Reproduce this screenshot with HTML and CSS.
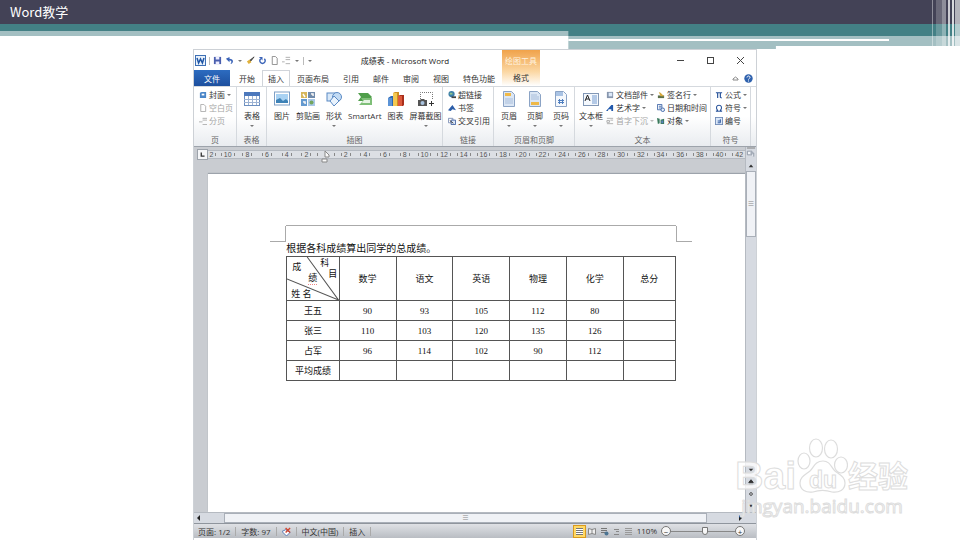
FILE: index.html
```
<!DOCTYPE html>
<html>
<head>
	<meta charset="utf-8">
	<title>Word教学</title>
	<link rel="stylesheet" href="styles.css">
</head>
<body>

	<header class="slide-header">
		<h1>Word教学</h1>
		<div class="band-teal"></div>
		<div class="band-light"></div>
		<div class="band-right"><div class="line"></div></div>
		<div class="stripes"></div>
	</header>

	<main class="slide">
		<div class="word">

			<!-- barra de titulo -->
			<div class="titlebar">
				<div class="quick">
					<svg class="logo" viewBox="0 0 11 11"><rect x=".5" y=".5" width="10" height="10" fill="#e8f1fb" stroke="#3d6fb4"/><path d="M2 3l1.600 5L5.500 4l1.900 4L9 3" fill="none" stroke="#1f55a5" stroke-width="1.500"/></svg>
					<i class="bar"></i>
					<svg viewBox="0 0 10 10"><path d="M1 1h8v8H1z" fill="#4a5fae"/><path d="M3 1h4v3H3zM3 6h4v3H3z" fill="#eef"/></svg>
					<svg viewBox="0 0 10 10"><path d="M1 3l4-2v2c5 0 5 5 1 6 2-3 1-4-1-4v2z" fill="#3b64b8"/></svg>
					<i class="arrow"></i>
					<svg viewBox="0 0 10 10"><path d="M9 1L5 6 4 5z" fill="#444" stroke="#444"/><path d="M1 6l3-2 2 3-3 2z" fill="#e0b13c"/></svg>
					<svg viewBox="0 0 10 10"><path d="M3 3a3 3 0 1 0 4 0" fill="none" stroke="#3b64b8" stroke-width="1.600"/><path d="M1 1h4v4z" fill="#3b64b8"/></svg>
					<svg viewBox="0 0 10 10"><path d="M2.500 .5h3.500l2 2v7H2.500z" fill="#fff" stroke="#888"/></svg>
					<svg viewBox="0 0 10 10"><path d="M4 1.500h5M4 4h5M4 8.500h5M0 6.500h3" stroke="#aaa" fill="none"/></svg>
					<i class="arrow"></i>
					<i class="bar"></i>
					<i class="arrow"></i>
				</div>
				<div class="doc-title">成绩表 - Microsoft Word</div>
				<div class="window-buttons">
					<button aria-label="最小化"><svg viewBox="0 0 10 10"><path d="M1 4.500h7" stroke="#444"/></svg></button>
					<button aria-label="最大化"><svg viewBox="0 0 10 10"><rect x="1.500" y="1.500" width="6" height="6" fill="none" stroke="#444"/></svg></button>
					<button aria-label="关闭"><svg viewBox="0 0 10 10"><path d="M1 1l7 7M8 1L1 8" stroke="#444"/></svg></button>
				</div>
			</div>

			<!-- abas -->
			<nav class="tabs">
				<button class="file">文件</button>
				<button>开始</button>
				<button class="active">插入</button>
				<button>页面布局</button>
				<button>引用</button>
				<button>邮件</button>
				<button>审阅</button>
				<button>视图</button>
				<button>特色功能</button>
				<button class="context"><span>绘图工具</span>格式</button>
				<div class="help">
					<svg viewBox="0 0 9 9"><path d="M2 5l2.500-2L7 5v1H2z" fill="none" stroke="#888"/></svg>
					<svg viewBox="0 0 9 9"><circle cx="4.500" cy="4.500" r="4.200" fill="#2f62ae"/><path d="M3 3.500c0-2 3-2 3 0 0 1-1.500 1-1.500 2M4.500 6.500v1" fill="none" stroke="#fff"/></svg>
				</div>
			</nav>

			<!-- faixa de opcoes -->
			<div class="ribbon">
				<section class="group">
					<div class="tools">
						<div class="col">
							<button><svg viewBox="0 0 9 9"><path d="M1 2l2-1h5v7H1z" fill="#4b86c8"/><path d="M3 3h3v2H3z" fill="#fff"/></svg>封面<i class="arrow"></i></button>
							<button class="off"><svg viewBox="0 0 9 9"><path d="M2 .5h3.500l2 2v6H2z" fill="#fff" stroke="#aaa"/></svg>空白页</button>
							<button class="off"><svg viewBox="0 0 9 9"><path d="M4 1.500h5M4 3.500h5M4 8.500h5M0 5.500h4" stroke="#aaa" fill="none"/></svg>分页</button>
						</div>
					</div>
					<h2>页</h2>
				</section>
				<section class="group">
					<div class="tools">
						<button class="big"><svg viewBox="0 0 16 16"><rect x=".5" y="1.500" width="15" height="13" fill="#fff" stroke="#6c8fc0"/><path d="M0 1h16v4H0z" fill="#4c78bc"/><path d="M0 8.500h16M0 11.500h16M4.500 5v9M8.500 5v9M12.500 5v9" stroke="#9db3d3"/></svg>表格<i class="arrow"></i></button>
					</div>
					<h2>表格</h2>
				</section>
				<section class="group">
					<div class="tools">
						<button class="big"><svg viewBox="0 0 16 16"><rect x=".5" y="1" width="15" height="13" fill="#fff" stroke="#7f9fc5"/><path d="M2 3h12v9H2z" fill="#a9d2f3"/><path d="M2 12V9l4-2 3 3 3-2 2 2v2z" fill="#3d82b7"/></svg>图片</button>
						<button class="big"><svg viewBox="0 0 16 16"><path d="M1 1h6v6H1z" fill="#d6b75c"/><path d="M8 1h7v6H8z" fill="#708bab"/><path d="M1 8h6v7H1z" fill="#649ad0"/><path d="M8 8h7v7H8z" fill="#a9c8e8"/><path d="M3 3l2 3M11 3h2v2M3 11h2v2" stroke="#fff" stroke-width="1.500"/><circle cx="11.500" cy="11.500" r="2" fill="#73a55d"/></svg>剪贴画</button>
						<button class="big"><svg viewBox="0 0 16 16"><rect x="1" y="2" width="9" height="8" fill="#d8e8f8" stroke="#5b8ac4"/><circle cx="11" cy="6" r="4.500" fill="#c2dbf4" stroke="#5b8ac4"/><path d="M8 5l5 5-5 5-4-5z" fill="#e9f3fd" stroke="#5b8ac4"/></svg>形状<i class="arrow"></i></button>
						<button class="big"><svg viewBox="0 0 16 16"><path d="M1 2h10l4 4-4 4H1l3-4z" fill="#4f9e4a"/><path d="M4 7h11v7H2l4-4z" fill="#7fbf78"/><path d="M7 9h6v3H5z" fill="#e4f3e2"/></svg>SmartArt</button>
						<button class="big"><svg viewBox="0 0 16 16"><path d="M0 7l3-2h3v9l-1 1H0z" fill="#2d67b1"/><path d="M0 7h4v8H0z" fill="#5b93d6"/><path d="M5 2l2-1h4v13l-1 1H5z" fill="#d08f1f"/><path d="M5 2h4v13H5z" fill="#f3c851"/><path d="M10 5l2-1h4v10l-1 1h-5z" fill="#a92f1c"/><path d="M10 5h4v10h-4z" fill="#dc5a3c"/></svg>图表</button>
						<button class="big"><svg viewBox="0 0 16 16"><path d="M2.500 8V1.500h12V9" fill="none" stroke="#777" stroke-dasharray="1 1"/><path d="M0 9h2l1-1h3l1 1h2v6H0z" fill="#555"/><circle cx="4.500" cy="12" r="2" fill="#a9c3df"/><path d="M11 12.500h5M13.500 10v5" stroke="#333"/></svg>屏幕截图<i class="arrow"></i></button>
					</div>
					<h2>插图</h2>
				</section>
				<section class="group">
					<div class="tools">
						<div class="col">
							<button><svg viewBox="0 0 9 9"><circle cx="4" cy="3.500" r="3.500" fill="#3d7fa9"/><path d="M2 2h3v2H2z" fill="#8fc58b"/><path d="M4 7h5" stroke="#444" stroke-width="2"/></svg>超链接</button>
							<button><svg viewBox="0 0 9 9"><path d="M0 7l5-6 4 6-4-1-2 2z" fill="#2b5da8"/></svg>书签</button>
							<button><svg viewBox="0 0 9 9"><path d="M.5 1.500h5v5h-5z" fill="#fff" stroke="#7a8db5"/><path d="M3.500 3.500h5v5h-5z" fill="#dce8f8" stroke="#3f5f9f"/><path d="M2 4l4 3" stroke="#333"/></svg>交叉引用</button>
						</div>
					</div>
					<h2>链接</h2>
				</section>
				<section class="group">
					<div class="tools wide">
						<button class="big"><svg viewBox="0 0 16 16"><path d="M2.500 .5h8l3 3v12h-11z" fill="#dbe6f4" stroke="#8ba3c5"/><path d="M4 2h6v3H4z" fill="#efb949"/><path d="M4 8h8M4 10h8M4 12h8" stroke="#a9bedb"/></svg>页眉<i class="arrow"></i></button>
						<button class="big"><svg viewBox="0 0 16 16"><path d="M2.500 .5h8l3 3v12h-11z" fill="#dbe6f4" stroke="#8ba3c5"/><path d="M4 11h8v3H4z" fill="#efb949"/><path d="M4 4h6M4 6h8M4 8h8" stroke="#a9bedb"/></svg>页脚<i class="arrow"></i></button>
						<button class="big"><svg viewBox="0 0 16 16"><path d="M2.500 .5h8l3 3v12h-11z" fill="#f5f8fc" stroke="#8ba3c5"/><path d="M3 1h7v4H3z" fill="#a9c3e4"/><path d="M5 9.500h6M5 11.500h6M6.500 8v5M9.500 8v5" stroke="#4f7fc0"/></svg>页码<i class="arrow"></i></button>
					</div>
					<h2>页眉和页脚</h2>
				</section>
				<section class="group">
					<div class="tools tight">
						<button class="big"><svg viewBox="0 0 16 16"><rect x=".5" y="2.500" width="15" height="12" fill="#f4f8fd" stroke="#8297b5"/><path d="M9 4h5v9H9z" fill="#b3c9e6"/><path d="M2 10l2.500-6L7 10M3 8h3" fill="none" stroke="#222"/></svg>文本框<i class="arrow"></i></button>
						<div class="col">
							<button><svg viewBox="0 0 9 9"><path d="M1 1h7v7H1z" fill="#8796ad"/><path d="M3 2h4v4H3z" fill="#dce8f8"/></svg>文档部件<i class="arrow"></i></button>
							<button><svg viewBox="0 0 9 9"><path d="M0 8l6-7h2v7H6V6H3L2 8z" fill="#2259ac"/></svg>艺术字<i class="arrow"></i></button>
							<button class="off"><svg viewBox="0 0 9 9"><path d="M1 1.500h7M5 3.500h3M1 7.500h7M1 4h3v2H1z" fill="none" stroke="#aaa"/></svg>首字下沉<i class="arrow"></i></button>
						</div>
						<div class="col">
							<button><svg viewBox="0 0 9 9"><path d="M1 5h7v3H1z" fill="#5b6f49"/><path d="M2 1l2 1 4 4H4z" fill="#d7a83b"/></svg>签名行<i class="arrow"></i></button>
							<button><svg viewBox="0 0 9 9"><path d="M.5 .5h5v6h-5z" fill="#fff" stroke="#3e66a8"/><path d="M2 2.500h3M2 4.500h3" stroke="#3e66a8"/><circle cx="6.500" cy="6.500" r="2" fill="#e8f0fa" stroke="#3e66a8"/></svg>日期和时间</button>
							<button><svg viewBox="0 0 9 9"><path d="M0 1l3 1v5l-2 1zM4 3l4-1v6H4z" fill="#39795c"/><path d="M5 4h2v3H5z" fill="#5b80c0"/></svg>对象<i class="arrow"></i></button>
						</div>
					</div>
					<h2>文本</h2>
				</section>
				<section class="group">
					<div class="tools tight">
						<div class="col">
							<button><svg viewBox="0 0 9 9"><path d="M1 2h7M3 2v6M6 2v5l1.500 1" fill="none" stroke="#234f98" stroke-width="1.300"/></svg>公式<i class="arrow"></i></button>
							<button><svg viewBox="0 0 9 9"><path d="M1 8h2.500C0 4 2 1.500 4.500 1.500S9 4 5.500 8H8" fill="none" stroke="#234f98" stroke-width="1.200"/></svg>符号<i class="arrow"></i></button>
							<button><svg viewBox="0 0 9 9"><rect x=".5" y=".5" width="8" height="8" fill="#dce8f8" stroke="#6f89b5"/><path d="M3 6.500h3V2.500M3 4.500h3" fill="none" stroke="#234f98"/></svg>编号</button>
						</div>
					</div>
					<h2>符号</h2>
				</section>
			</div>

			<!-- regua e documento -->
			<div class="workspace">
				<div class="editor">
					<div class="ruler">
						<div class="tab-stop"><svg viewBox="0 0 11 11"><path d="M4 3v4.500h4" fill="none" stroke="#333" stroke-width="1.600"/></svg></div>
						<div class="scale">
							<span class="cut">2</span><span>10</span><span>8</span><span>6</span><span>4</span><span>2</span><span class="mark"><svg viewBox="0 0 12 12"><path d="M5 0l4 4v2H5zM2 8h5v3H2z" fill="#fafafa" stroke="#888"/></svg></span><span>2</span><span>4</span><span>6</span><span>8</span><span>10</span><span>12</span><span>14</span><span>16</span><span>18</span><span>20</span><span>22</span><span>24</span><span>26</span><span>28</span><span>30</span><span>32</span><span>34</span><span>36</span><span>38</span><span>40</span><span>42</span>
						</div>
					</div>
					<div class="paper">
						<div class="margin-box"><i></i><i></i></div>
						<p>根据各科成绩算出同学的总成绩。</p>
						<table>
							<thead>
								<tr>
									<th class="corner">
										<svg viewBox="0 0 51 43" preserveAspectRatio="none"><path d="M20 0L51 43L0 22" fill="none" stroke="#555"/></svg>
										<span class="c1">成</span><span class="c2">科</span><span class="c3">绩</span><span class="c4">目</span><span class="c5">姓 名</span>
									</th>
									<th>数学</th><th>语文</th><th>英语</th><th>物理</th><th>化学</th><th>总分</th>
								</tr>
							</thead>
							<tbody>
								<tr><td>王五</td><td>90</td><td>93</td><td>105</td><td>112</td><td>80</td><td></td></tr>
								<tr><td>张三</td><td>110</td><td>103</td><td>120</td><td>135</td><td>126</td><td></td></tr>
								<tr><td>占军</td><td>96</td><td>114</td><td>102</td><td>90</td><td>112</td><td></td></tr>
								<tr><td>平均成绩</td><td></td><td></td><td></td><td></td><td></td><td></td></tr>
							</tbody>
						</table>
					</div>
				</div>
				<div class="vscroll">
					<svg viewBox="0 0 11 11"><path d="M1 0h9" stroke="#777"/><path d="M1.500 3.500h5v4h-5zM4.500 5.500h4v4" fill="#f2f4f8" stroke="#8b95a3"/></svg>
					<svg viewBox="0 0 11 11"><path d="M3 8l2.500-3L8 8z" fill="#333"/></svg>
					<div class="thumb">≡</div>
					<div class="rail"></div>
					<svg viewBox="0 0 11 11"><path d="M3 4h5L5.500 7z" fill="#333"/></svg>
					<svg viewBox="0 0 11 11"><path d="M3 6l2.500-3L8 6zM3 8h5" fill="#333" stroke="#333"/></svg>
					<svg viewBox="0 0 11 11"><circle cx="5.500" cy="5.500" r="1.500" fill="none" stroke="#444"/></svg>
					<svg viewBox="0 0 11 11"><path d="M3 4h5L5.500 7z" fill="#333"/></svg>
				</div>
			</div>
			<div class="hscroll">
				<svg viewBox="0 0 10 10"><path d="M6 2v6L3 5z" fill="#222"/></svg>
				<div class="thumb">≡</div>
				<svg viewBox="0 0 10 10"><path d="M4 2v6l3-3z" fill="#222"/></svg>
			</div>

			<footer class="status">
				<span>页面: 1/2</span>
				<span>字数: 97</span>
				<span><svg viewBox="0 0 10 10"><path d="M0 5l4-2 5 3-4 4z" fill="#fff" stroke="#4d70b0"/><path d="M4 1l5 5M9 1L4 6" stroke="#d2452f" stroke-width="1.500"/></svg></span>
				<span>中文(中国)</span>
				<span>插入</span>
				<div class="views">
					<button class="on" aria-label="页面视图"><svg viewBox="0 0 9 9"><path d="M1 1h7v7H1z" fill="#fff"/><path d="M1 1.500h7M1 3.500h7M1 5.500h7M1 7.500h7" stroke="#777"/></svg></button>
					<button aria-label="阅读版式"><svg viewBox="0 0 9 9"><path d="M.5 1.500l3.500 1 3.500-1v6l-3.500-1-3.500 1zM4 2v5" fill="#eee" stroke="#888"/></svg></button>
					<button aria-label="Web 版式"><svg viewBox="0 0 9 9"><path d="M1 1.500h6M1 3.500h6M1 5.500h4" stroke="#777"/><circle cx="6.500" cy="6.500" r="2" fill="#4c7593"/></svg></button>
					<button aria-label="大纲"><svg viewBox="0 0 9 9"><path d="M2 2.500h5M4 4.500h3M2 7.500h5" stroke="#888"/></svg></button>
					<button aria-label="草稿"><svg viewBox="0 0 9 9"><path d="M1 1.500h7M1 3.500h7M1 5.500h7M1 7.500h7" stroke="#999"/></svg></button>
				</div>
				<label for="zoom">110%</label>
				<button class="round" aria-label="缩小">−</button>
				<input type="range" id="zoom" min="10" max="200" value="112">
				<button class="round" aria-label="放大">+</button>
			</footer>
		</div>

		<div class="watermark">
			<div class="brand">
				<b>Bai</b>
				<svg viewBox="0 0 52 56"><g fill="#fff" fill-opacity=".8" stroke="#ddd" stroke-width="1.200"><ellipse cx="8" cy="23" rx="6" ry="8"/><ellipse cx="20" cy="10" rx="6.500" ry="9"/><ellipse cx="35" cy="11" rx="6.500" ry="9"/><ellipse cx="45" cy="27" rx="6.500" ry="8"/><path d="M27 23c-8 0-9 6-13 10-5 4-10 6-10 12 0 7 6 10 13 9 6-2 13-2 19 0 7 1 13-2 13-9 0-6-5-8-10-12-4-4-5-10-12-10z"/></g><text x="27" y="50" text-anchor="middle">du</text></svg>
				<b class="cn">经验</b>
			</div>
			<div class="url">jingyan.baidu.com</div>
		</div>
	</main>

</body>
</html>
```
FILE: styles.css
```
* {
	box-sizing: border-box;
}

body {
	margin: 0;
	min-height: 100vh;
	display: flex;
	flex-direction: column;
	background: #fff;
	color: #333;
	font-family: "Open Sans", "Noto Sans CJK SC", sans-serif;
	font-size: 8px;
	line-height: 12px;
}

button {
	border: 0;
	padding: 0;
	background: none;
	color: inherit;
	font: inherit;
	white-space: nowrap;
}

svg {
	display: block;
	flex: none;
}

/* cabecalho do slide */
.slide-header {
	position: relative;
	height: 49px;
	flex: none;
}

.slide-header h1 {
	margin: 0;
	padding-left: 10px;
	height: 24px;
	background: #434256;
	color: #fff;
	font-family: "Noto Sans CJK SC", sans-serif;
	font-size: 13px;
	font-weight: normal;
	line-height: 24px;
}

.band-teal {
	height: 7px;
	background: #438085;
}

.band-light {
	height: 5px;
	background: #a3bfc2;
}

/* a parte direita fica por cima das duas faixas */
.band-right {
	position: absolute;
	top: 31px;
	right: 0;
	width: 40.800%;
	height: 18px;
	padding-top: 8px;
	background: linear-gradient(#438085 5px, #a3bfc2 5px);
	clip-path: polygon(0 0, 100% 0, 100% 15px, 53% 15px, 53% 100%, 0 100%);
}

.line {
	width: 82%;
	height: 2px;
	background: #fff;
}

.stripes {
	position: absolute;
	top: 0;
	right: 0;
	width: 28px;
	height: 49px;
	background: linear-gradient(90deg, #fff6 1px, #fff0 1px 4px, #fff3 4px 10px, #fff6 10px 14px, #fff0 14px 16px, #fffb 16px 18px, #fff0 18px 20px, #fffc 20px 22px, #fff0 22px 23px, #fff9 23px);
}

.slide {
	position: relative;
	flex: 1;
	display: grid;
	grid-template-columns: 193fr 564fr 203fr;
}

/* janela do word */
.word {
	grid-column: 2;
	display: flex;
	flex-direction: column;
	border: 1px solid #cdd1d6;
	border-width: 1px 1px 0;
	padding-bottom: 2px;
	background: #fff;
}

.titlebar {
	display: grid;
	grid-template-columns: 161fr 100fr 301fr;
	align-items: center;
	height: 21px;
}

.quick {
	display: flex;
	align-items: center;
	gap: 3px;
	padding-left: 1px;
}

.quick svg {
	width: 9px;
	height: 9px;
}

.quick .logo {
	width: 11px;
	height: 11px;
}

.bar {
	width: 1px;
	height: 8px;
	background: #bbb;
}

.arrow {
	border: 2px solid transparent;
	border-top-color: #777;
	border-bottom: 0;
}

.quick .arrow {
	margin: 0 1px;
}

.doc-title {
	white-space: nowrap;
	color: #222;
	text-align: center;
}

.window-buttons {
	display: flex;
	justify-content: flex-end;
	gap: 20px;
	padding-right: 10px;
}

.window-buttons svg {
	width: 10px;
	height: 10px;
}

.tabs {
	display: flex;
	align-items: flex-end;
	height: 16px;
	border-bottom: 1px solid #d5d9de;
}

.tabs button {
	height: 16px;
	padding: 0 7px;
	line-height: 15px;
}

.tabs .file {
	width: 36px;
	margin-right: 2px;
	background: linear-gradient(#2d6cc0, #1d4f9e);
	color: #fff;
}

.tabs .active {
	padding: 0 5px;
	border: 1px solid #d0d4da;
	border-bottom: 0;
	background: #fff;
}

.tabs .context {
	display: flex;
	flex-direction: column;
	align-items: center;
	height: 36px;
	padding: 3px 3px 0;
	background: linear-gradient(#f0a24a, #fbd7a3 60%, #fff);
}

.tabs .context span {
	height: 17px;
	color: #fff3df;
}

.help {
	display: flex;
	align-items: center;
	gap: 4px;
	height: 16px;
	margin-left: auto;
	padding-right: 3px;
}

.help svg {
	width: 9px;
	height: 9px;
}

.ribbon {
	display: grid;
	grid-template-columns: 43fr 30fr 176fr 51fr 81fr 136fr 40fr 5fr;
	height: 60px;
	border-bottom: 1px solid #9da3ab;
	background: linear-gradient(#fff, #fff 50%, #e9ecf0);
}

.group {
	display: flex;
	flex-direction: column;
	justify-content: space-between;
	min-width: 0;
	border-right: 1px solid #d5d9de;
}

.group h2 {
	margin: 0;
	color: #666;
	font-size: 8px;
	font-weight: normal;
	text-align: center;
}

.tools {
	display: flex;
	gap: 6px;
	padding: 1px 0 0 7px;
}

.tools.wide {
	gap: 10px;
}

.tools.tight {
	gap: 3px;
	padding-left: 4px;
}

.group:nth-child(1) .tools,
.group:nth-child(4) .tools {
	padding-left: 5px;
}

.big {
	display: flex;
	flex-direction: column;
	align-items: center;
}

.big svg {
	width: 16px;
	height: 16px;
	margin: 3px 0;
}

.big .arrow {
	margin-top: 3px;
}

.col {
	display: flex;
	flex-direction: column;
	align-items: flex-start;
}

.col button {
	display: flex;
	align-items: center;
	gap: 2px;
	height: 13px;
}

.col svg {
	width: 8px;
	height: 8px;
}

.off {
	color: #a5a5a5;
}

.off .arrow {
	border-top-color: #bbb;
}

.workspace {
	flex: 1;
	display: flex;
	background: #c9ccd1;
}

.editor {
	flex: 1;
	display: flex;
	flex-direction: column;
}

.ruler {
	display: flex;
	align-items: center;
	height: 15px;
	margin: 0 -4px 12px 0;
	padding-left: 3px;
	background: #c9ccd1;
}

.tab-stop {
	width: 11px;
	height: 11px;
	border: 1px solid #9da3ab;
	background: #f5f6f8;
}

.scale {
	flex: 1;
	display: flex;
	height: 9px;
	border: 1px solid #b5bac1;
	border-width: 1px 0;
	background: #dcdfe4;
	color: #555;
	font-family: "Liberation Sans", sans-serif;
	font-size: 7px;
	line-height: 8px;
}

.scale span {
	flex: 2 1 0;
	display: flex;
	justify-content: center;
	gap: 2px;
	min-width: 0;
}

.scale span::before,
.scale span::after {
	content: "";
	align-self: center;
	width: 1px;
	height: 3px;
	background: #888;
}

.scale .cut {
	flex: 1 1 0;
}

.scale .cut::before {
	display: none;
}

.scale svg {
	width: 12px;
	height: 12px;
}

.paper {
	flex: 1;
	margin-left: 14px;
	padding: 51px 12.500% 0 14.200%;
	background: #fff;
	box-shadow: 0 -1px 1px #9da3ab;
	color: #111;
	font-family: "Liberation Serif", "Noto Sans CJK SC", serif;
}

/* cantos da margem da pagina */
.margin-box {
	display: flex;
	justify-content: space-between;
	height: 17px;
	border-top: 1px solid #aaa;
}

.margin-box i {
	width: 16px;
	margin: 0 -16px;
	border: 1px solid #aaa;
	border-width: 0 1px 1px 0;
}

.margin-box i:last-child {
	border-width: 0 0 1px 1px;
}

.paper p {
	margin: 0;
	height: 14px;
	font-size: 10px;
	line-height: 14px;
	white-space: nowrap;
}

table {
	width: 100%;
	border-collapse: collapse;
	table-layout: fixed;
	font-size: 9px;
}

th,
td {
	height: 20px;
	padding: 0;
	border: 1px solid #555;
	font-weight: normal;
	line-height: 12px;
	text-align: center;
}

th {
	height: 44px;
}

.corner {
	position: relative;
	width: 13.500%;
}

th:last-child {
	width: 13.500%;
}

.corner svg {
	position: absolute;
	inset: 0;
	width: 100%;
	height: 100%;
}

.corner span {
	position: absolute;
}

.c1 {
	top: 4px;
	left: 5px;
}

.c2 {
	top: 0;
	left: 33px;
}

.c3 {
	top: 15px;
	left: 21px;
	border-bottom: 1px dotted #e88;
}

.c4 {
	top: 11px;
	left: 41px;
}

.c5 {
	bottom: 0;
	left: 4px;
}

.vscroll {
	display: flex;
	flex-direction: column;
	width: 11px;
	border-left: 1px solid #b5bac1;
	background: #d6dae1;
}

.vscroll svg {
	width: 10px;
	height: 12px;
}

.thumb {
	border: 1px solid #a9afb8;
	background: #f0f2f6;
	color: #888;
	font-size: 7px;
	text-align: center;
}

.vscroll .thumb {
	height: 66px;
	line-height: 64px;
}

.rail {
	flex: 1;
}

.hscroll {
	display: flex;
	align-items: center;
	height: 11px;
	padding-right: 11px;
	border-top: 1px solid #b5bac1;
	background: #d6dae1;
}

.hscroll svg {
	width: 10px;
	height: 10px;
}

.hscroll .thumb {
	flex: 1;
	height: 10px;
	margin: 0 28px 0 20px;
	line-height: 8px;
}

.status {
	display: flex;
	align-items: center;
	height: 15px;
	padding: 0 11px 0 4px;
	border-top: 1px solid #8f959d;
	background: linear-gradient(#dfe1e5, #b9bdc3);
}

.status span {
	margin-right: 5px;
	padding-right: 5px;
	border-right: 1px solid #aaa;
	line-height: 9px;
	white-space: nowrap;
}

.status svg {
	width: 9px;
	height: 9px;
}

.views {
	display: flex;
	gap: 1px;
	margin: 0 3px 0 auto;
}

.views button {
	padding: 1px;
}

.views .on {
	border: 1px solid #d99a1f;
	background: #ffd966;
}

.round {
	width: 10px;
	height: 10px;
	margin-left: 4px;
	border: 1px solid #777;
	border-radius: 50%;
	background: #f7f7f7;
	line-height: 7px;
}

#zoom {
	appearance: none;
	width: 64px;
	height: 10px;
	margin: 0;
	background: linear-gradient(#888, #888) center / 100% 1px no-repeat;
}

#zoom::-webkit-slider-thumb {
	appearance: none;
	width: 6px;
	height: 8px;
	border: 1px solid #777;
	border-radius: 0 0 3px 3px;
	background: #f7f7f7;
}

#zoom + .round {
	margin-left: 0;
}

/* marca d'agua por cima de tudo */
.watermark {
	position: absolute;
	right: 52px;
	bottom: 22px;
	color: #fffc;
	-webkit-text-stroke: 1px #ddd;
}

.brand {
	display: flex;
	align-items: flex-end;
}

.brand b {
	font-family: "Liberation Sans", sans-serif;
	font-size: 39px;
	line-height: 36px;
}

.brand svg {
	width: 52px;
	height: 56px;
}

.brand text {
	fill: #fff;
	stroke: #ddd;
	font: bold 23px "Liberation Sans", sans-serif;
}

.brand .cn {
	font-family: "Noto Sans CJK SC", sans-serif;
	font-size: 30px;
	line-height: 40px;
}

.url {
	padding-left: 6px;
	font-size: 19px;
	line-height: 24px;
}
```
